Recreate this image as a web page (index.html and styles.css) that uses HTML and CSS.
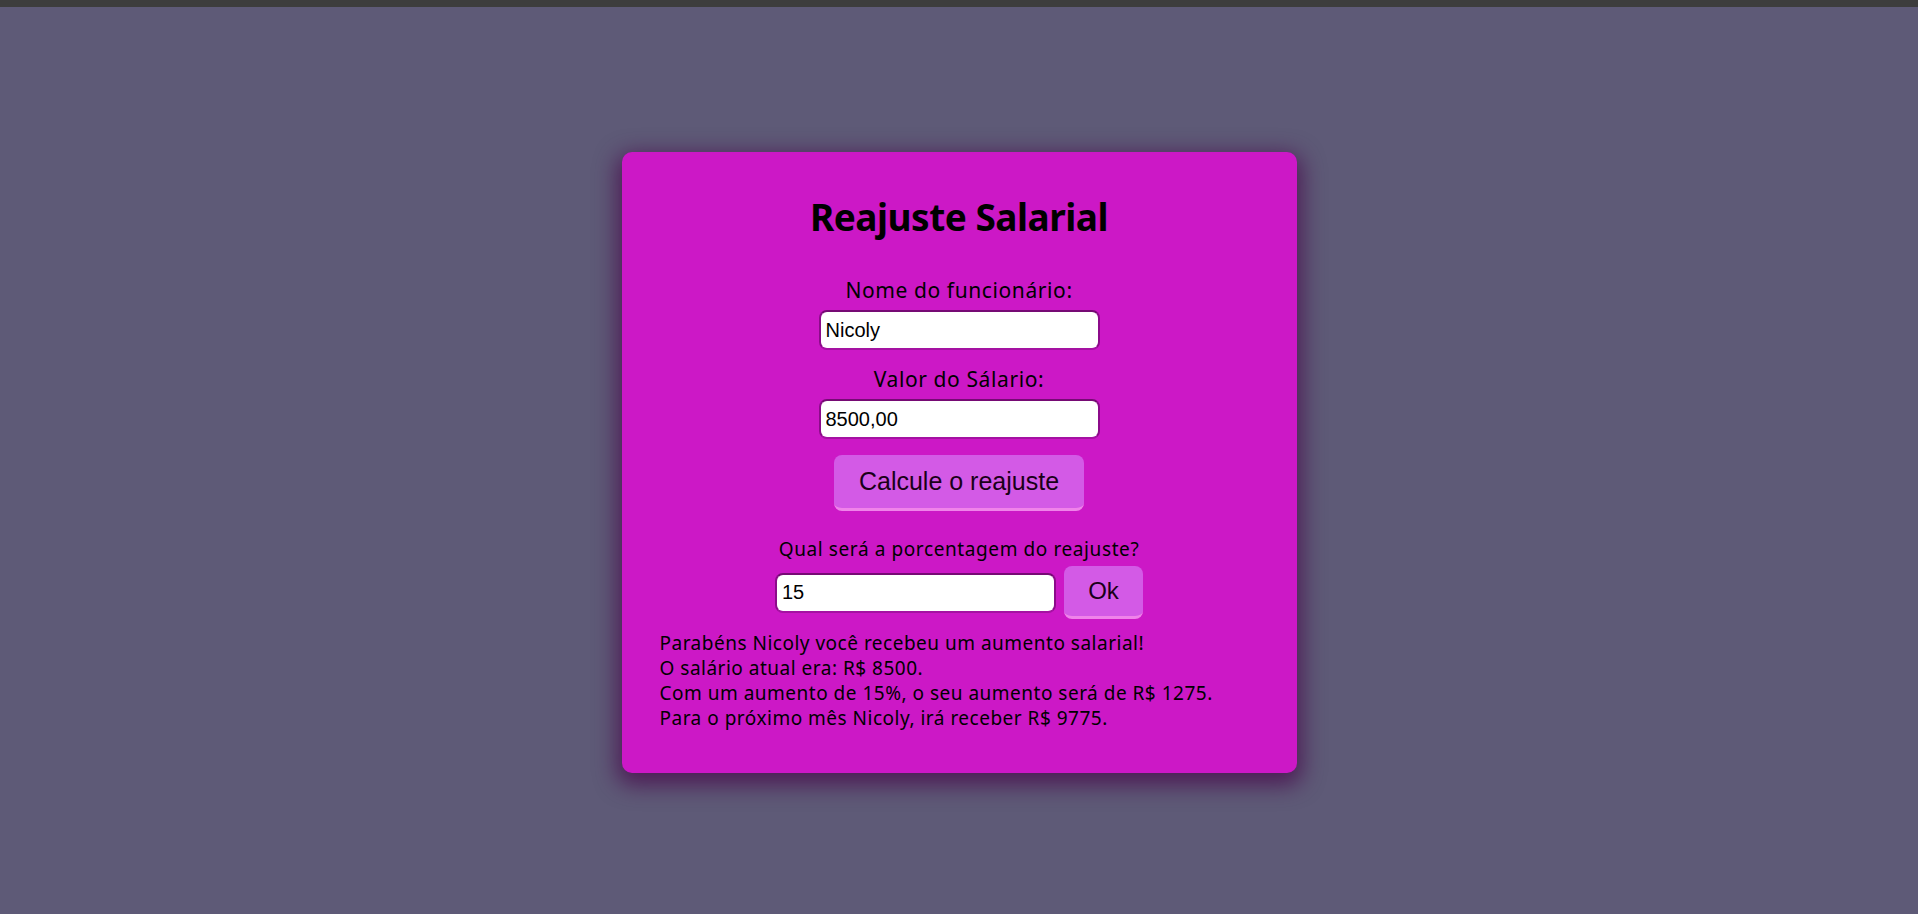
FILE: index.html
```html
<!DOCTYPE html>
<html lang="pt-BR">
<head>
<meta charset="utf-8">
<title>Reajuste Salarial</title>
<link rel="stylesheet" href="styles.css">
</head>
<body>
<div class="topbar"></div>
<main class="page">
  <section class="card">
    <h1 class="title">Reajuste Salarial</h1>
    <label class="label" for="nome">Nome do funcionário:</label>
    <input class="field" id="nome" type="text" value="Nicoly">
    <label class="label label-second" for="salario">Valor do Sálario:</label>
    <input class="field" id="salario" type="text" value="8500,00">
    <button class="btn btn-calc" type="button">Calcule o reajuste</button>
    <p class="question">Qual será a porcentagem do reajuste?</p>
    <div class="row">
      <input class="field" type="text" value="15">
      <button class="btn btn-ok" type="button">Ok</button>
    </div>
    <div class="result">
      Parabéns Nicoly você recebeu um aumento salarial!<br>
      O salário atual era: R$ 8500.<br>
      Com um aumento de 15%, o seu aumento será de R$ 1275.<br>
      Para o próximo mês Nicoly, irá receber R$ 9775.
    </div>
  </section>
</main>
</body>
</html>
```

FILE: styles.css
```css
html, body {
  margin: 0;
  padding: 0;
}
body {
  background: #5e5a77;
  font-family: "Noto Sans", "Open Sans", sans-serif;
  color: #000;
  min-height: 914px;
}
.topbar {
  height: 7px;
  background: #3d3d3d;
}
.page {
  display: flex;
  justify-content: center;
  padding-top: 145px;
}
.card {
  width: 675px;
  box-sizing: border-box;
  background: #cc18c6;
  border-radius: 10px;
  box-shadow: 0 7px 22px 5px rgba(72, 12, 78, 0.8);
  padding: 41px 38px 42px;
  display: flex;
  flex-direction: column;
  align-items: center;
}
.title {
  margin: 0;
  font-size: 37px;
  letter-spacing: -0.5px;
  line-height: 48px;
  font-weight: bold;
}
.label {
  display: block;
  font-size: 21px;
  letter-spacing: 0.6px;
  line-height: 24px;
  margin-top: 37px;
}
.label-second {
  margin-top: 17px;
}
.field {
  box-sizing: border-box;
  width: 281px;
  height: 40px;
  margin-top: 8px;
  padding: 0 5px;
  font-family: "Liberation Sans", Arial, sans-serif;
  font-size: 20px;
  color: #000;
  background: #fff;
  border: 2px solid #8c0b8a;
  border-top-color: #760a74;
  border-bottom-color: #a512a2;
  border-radius: 8px;
  outline: none;
}
.btn {
  box-sizing: border-box;
  font-family: "Liberation Sans", Arial, sans-serif;
  font-size: 24px;
  color: #1a0018;
  background: #d35ae6;
  border: none;
  border-bottom: 3px solid #f083ea;
  border-radius: 8px;
  cursor: pointer;
}
.btn-calc {
  height: 56px;
  padding: 0 25px;
  margin-top: 16px;
  font-size: 25px;
}
.question {
  margin: 27px 0 0;
  font-size: 19px;
  letter-spacing: 0.6px;
  line-height: 22px;
}
.row {
  display: flex;
  align-items: center;
  gap: 8px;
  margin-top: 6px;
}
.row .field {
  margin-top: 0;
}
.btn-ok {
  width: 79px;
  height: 53px;
  padding: 0;
}
.result {
  align-self: stretch;
  margin-top: 12px;
  font-size: 19px;
  letter-spacing: 0.5px;
  line-height: 25px;
  text-align: left;
}
```
